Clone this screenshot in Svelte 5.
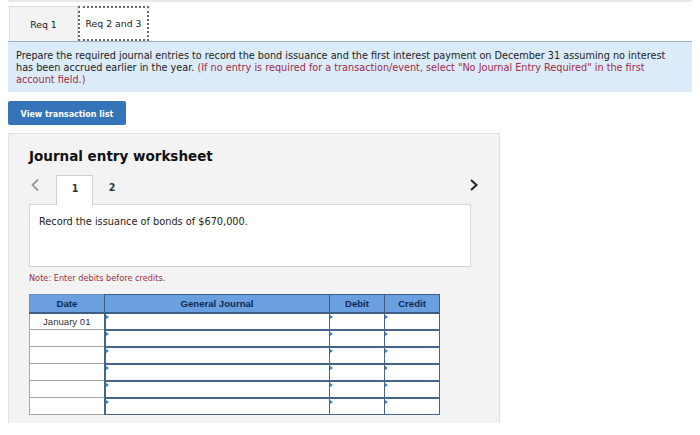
<script>
  let rows = ["January 01", "", "", "", "", ""];
</script>

<div class="page">
  <div class="tabs">
    <div class="tab">Req 1</div>
    <div class="tab active">Req 2 and 3</div>
  </div>

  <div class="prompt">
    Prepare the required journal entries to record the bond issuance and the first interest payment on December 31 assuming no interest has been accrued earlier in the year.
    <span class="red">(If no entry is required for a transaction/event, select "No Journal Entry Required" in the first account field.)</span>
  </div>

  <button class="list-btn">View transaction list</button>

  <div class="card">
    <h2>Journal entry worksheet</h2>

    <div class="pager">
      <svg class="arrow" width="10" height="14" viewBox="0 0 10 14"><path d="M8 1.5 L2.5 7 L8 12.5" fill="none" stroke="#9a9a9a" stroke-width="1.8" /></svg>
      <div class="num current">1</div>
      <div class="num">2</div>
      <svg class="arrow next" width="10" height="14" viewBox="0 0 10 14"><path d="M2 2 L7.5 7 L2 12" fill="none" stroke="#222" stroke-width="2" /></svg>
    </div>

    <div class="record">Record the issuance of bonds of $670,000.</div>

    <p class="note">Note: Enter debits before credits.</p>

    <table>
      <thead>
        <tr>
          <th class="date">Date</th>
          <th class="journal">General Journal</th>
          <th class="money">Debit</th>
          <th class="money">Credit</th>
        </tr>
      </thead>
      <tbody>
        {#each rows as row}
          <tr>
            <td class="date">{row}</td>
            <td class="entry"></td>
            <td class="entry"></td>
            <td class="entry"></td>
          </tr>
        {/each}
      </tbody>
    </table>
  </div>
</div>

<style>
  :global(body) {
    background: #fff;
  }

  .page {
    width: 684px;
    height: 435px;
    margin: 0 8px;
    overflow: hidden;
    font-family: "DejaVu Sans", Verdana, sans-serif;
    color: #222;
    border-top: 2px solid #e8e8e8;
    box-sizing: border-box;
  }

  .tabs {
    display: flex;
    margin-top: 4px;
    padding-left: 1px;
    height: 35px;
  }

  .tab {
    width: 69px;
    display: flex;
    align-items: center;
    justify-content: center;
    font-size: 9.3px;
    background: #f3f3f3;
    border: 1px solid #ddd;
    border-bottom: none;
    box-sizing: border-box;
  }

  .tab.active {
    width: 71px;
    background: #fff;
    border: 2px dotted #667;
  }

  .prompt {
    background: #dcebf9;
    border-top: 1px solid #9fb2c4;
    height: 51px;
    box-sizing: border-box;
    padding: 8px 20px 0 8px;
    font-size: 9.7px;
    line-height: 12px;
  }

  .red {
    color: #a02c45;
  }

  .list-btn {
    display: block;
    width: 118px;
    height: 24px;
    margin-top: 9px;
    padding: 2px 0 0;
    background: #3574b8;
    color: #fff;
    border: none;
    border-radius: 2px;
    font-family: inherit;
    font-size: 8px;
    font-weight: bold;
  }

  .card {
    width: 492px;
    height: 290px;
    margin-top: 8px;
    padding: 13px 20px 0 20px;
    background: #f3f3f3;
    border: 1px solid #e2e2e2;
    border-bottom: none;
    box-sizing: border-box;
  }

  h2 {
    margin: 0;
    font-size: 13.5px;
    line-height: 18px;
    font-weight: bold;
    color: #111;
  }

  .pager {
    display: flex;
    align-items: flex-end;
    height: 30px;
    margin-top: 10px;
    position: relative;
    z-index: 1;
    margin-bottom: -1px;
  }

  .arrow {
    align-self: flex-start;
    margin: 3px 16px 0 1px;
  }

  .arrow.next {
    margin: 3px 0 0 auto;
  }

  .num {
    width: 37px;
    height: 30px;
    box-sizing: border-box;
    display: flex;
    align-items: center;
    justify-content: center;
    padding: 0 0 5px 1px;
    font-size: 9.6px;
    font-weight: bold;
    color: #333;
  }

  .num.current {
    background: #fff;
    border: 1px solid #cfcfcf;
    border-bottom: none;
  }

  .record {
    width: 442px;
    height: 63px;
    box-sizing: border-box;
    padding: 11px 9px 0;
    background: #fff;
    border: 1px solid #d6d6d6;
    font-size: 9.75px;
    line-height: 12px;
  }

  .note {
    margin: 6px 0 11px;
    font-size: 8.2px;
    line-height: 10px;
    color: #a0303f;
  }

  table {
    border-collapse: collapse;
    table-layout: fixed;
    width: 411px;
    font-family: "Liberation Sans", Arial, sans-serif;
    font-size: 9.6px;
  }

  th, td {
    box-sizing: border-box;
  }

  th {
    height: 18px;
    padding: 0;
    background: #6a9fe0;
    color: #0f2a50;
    border: 1px solid #3d5f86;
    border-bottom-width: 2px;
    font-weight: bold;
  }

  th.date {
    width: 75px;
    border-color: #6f92bd #3d5f86 #3d5f86 #8a8a8a;
  }

  th.journal {
    width: 225px;
  }

  th.money {
    width: 55px;
  }

  td {
    height: 17px;
    padding: 0;
    background: #fff;
  }

  td.date {
    text-align: center;
    color: #333;
    border: 1px solid #a5a5a5;
    border-right: 2px solid #44648c;
  }

  td.entry {
    border: 2px solid #44648c;
    border-width: 2px 1px 1px 1px;
    position: relative;
  }

  td.entry::before {
    content: "";
    position: absolute;
    top: 1px;
    left: 0;
    border-left: 3px solid #3f7fc0;
    border-top: 2px solid transparent;
    border-bottom: 2px solid transparent;
  }
</style>
